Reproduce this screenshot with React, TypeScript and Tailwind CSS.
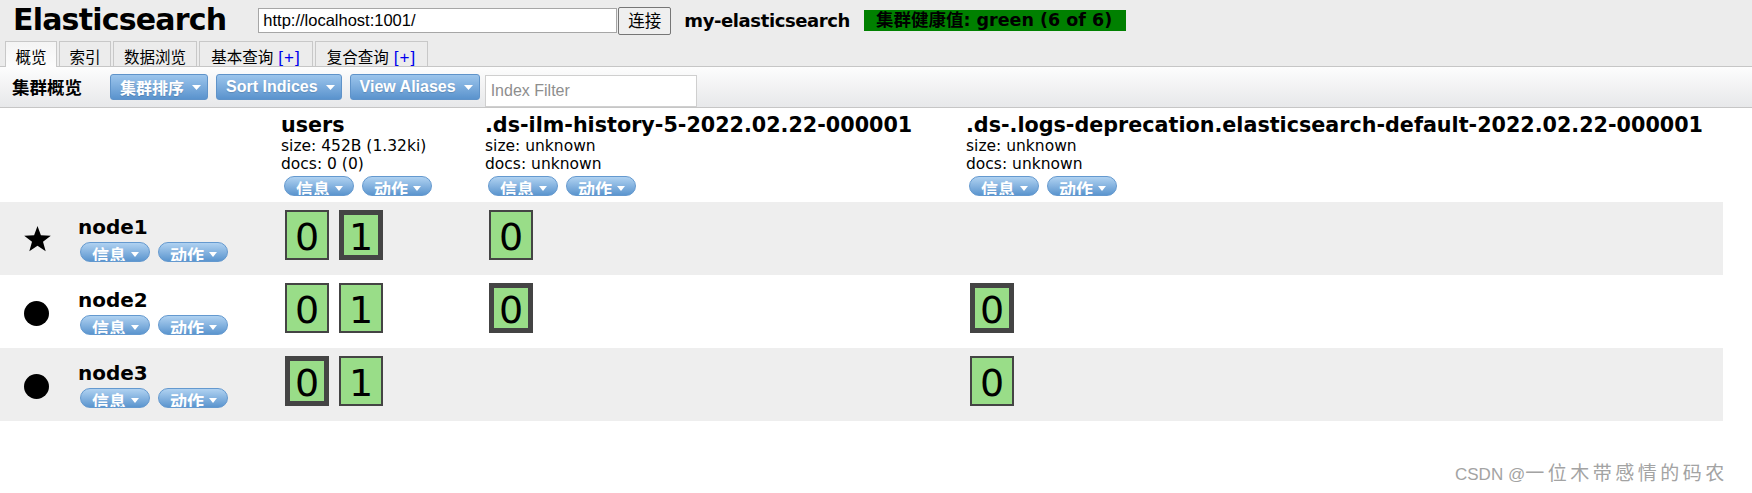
import React from "react";

type ShardT = { n: number; primary?: boolean };

const indices = [
  { name: "users", size: "452B (1.32ki)", docs: "0 (0)" },
  { name: ".ds-ilm-history-5-2022.02.22-000001", size: "unknown", docs: "unknown" },
  { name: ".ds-.logs-deprecation.elasticsearch-default-2022.02.22-000001", size: "unknown", docs: "unknown" },
];

const nodes: { name: string; master?: boolean; shards: ShardT[][] }[] = [
  {
    name: "node1",
    master: true,
    shards: [[{ n: 0 }, { n: 1, primary: true }], [{ n: 0 }], []],
  },
  {
    name: "node2",
    shards: [[{ n: 0 }, { n: 1 }], [{ n: 0, primary: true }], [{ n: 0, primary: true }]],
  },
  {
    name: "node3",
    shards: [[{ n: 0, primary: true }, { n: 1 }], [], [{ n: 0 }]],
  },
];

const tabs = [
  { label: "概览", w: "w-[52px]", active: true },
  { label: "索引", w: "w-[52px]" },
  { label: "数据浏览", w: "w-[84px]" },
  { label: "基本查询", w: "w-[114px]", plus: true },
  { label: "复合查询", w: "w-[113px]", plus: true },
];

export default function App() {
  return (
    <div className="relative w-[1752px] h-[493px] overflow-hidden bg-white text-black font-['DejaVu_Sans','Noto_Sans_CJK_SC',sans-serif]">
      {/* top bar */}
      <div className="bg-[#ececec]">
        <div className="flex items-center h-[41px]">
          <h1 className="ml-[13px] -mt-[2px] text-[30px] leading-[30px] font-bold tracking-[-0.8px]">
            Elasticsearch
          </h1>
          <input
            readOnly
            value="http://localhost:1001/"
            className="ml-[32px] w-[359px] h-[25px] bg-white border border-[#a6a6a6] pl-[4px] outline-none font-['Liberation_Sans',sans-serif] text-[16.5px]"
          />
          <button className="ml-[1px] w-[53px] h-[28px] border border-[#767676] rounded-[2px] bg-[#efefef] font-['Noto_Sans_CJK_SC',sans-serif] text-[16.5px] leading-none">
            连接
          </button>
          <span className="ml-[13px] text-[18px] font-bold tracking-[-0.4px]">my-elasticsearch</span>
          <span className="ml-[14px] w-[262px] h-[21px] bg-[#008000] pl-[12px] flex items-center text-[17.5px] font-bold whitespace-nowrap">
            集群健康值: green (6 of 6)
          </span>
        </div>
        <div className="flex h-[25px] pl-[5px] gap-[2px]">
          {tabs.map((t) => (
            <div
              key={t.label}
              className={`${t.w} border border-b-0 border-[#c8c8c8] flex justify-center items-baseline pt-[7px] font-['Noto_Sans_CJK_SC',sans-serif] text-[15.5px] leading-[15px] whitespace-nowrap ${
                t.active ? "relative z-10 h-[26px] bg-linear-to-b from-[#f4f4f4] to-[#fdfdfd]" : "h-[25px] bg-[#ececec]"
              }`}
            >
              {t.label}
              {t.plus && (
                <span className="ml-[5px] text-[#0000ee] font-['Liberation_Sans',sans-serif] text-[17px] tracking-[1px]">[+]</span>
              )}
            </div>
          ))}
        </div>
      </div>

      {/* toolbar */}
      <div className="h-[42px] border-t border-b border-[#c6c6c6] bg-linear-to-b from-[#fdfdfd] to-[#e7e8ea] flex items-center">
        <span className="ml-[12px] font-['Noto_Sans_CJK_SC',sans-serif] text-[17.5px] font-bold">集群概览</span>
        <ToolButton className="ml-[28px]" cjk>
          集群排序
        </ToolButton>
        <ToolButton className="ml-[8px]">Sort Indices</ToolButton>
        <ToolButton className="ml-[8px]">View Aliases</ToolButton>
        <input
          placeholder="Index Filter"
          className="ml-[5px] self-end w-[212px] h-[32px] bg-white border border-[#cfcfcf] pl-[5px] outline-none font-['Liberation_Sans',sans-serif] text-[16px] placeholder:text-[#8e8e8e]"
        />
      </div>

      {/* cluster table */}
      <div className="w-[1723px]">
        <div className="grid grid-cols-[281px_204px_481px_757px] h-[94px]">
          <div />
          {indices.map((idx) => (
            <div key={idx.name} className="pt-[6px] whitespace-nowrap">
              <div className="text-[20.7px] leading-[23px] font-bold">{idx.name}</div>
              <div className="text-[15.5px] leading-[18px]">size: {idx.size}</div>
              <div className="text-[15.5px] leading-[18px]">docs: {idx.docs}</div>
              <div className="flex gap-[8px] mt-[3px] ml-[3px]">
                <Pill label="信息" />
                <Pill label="动作" />
              </div>
            </div>
          ))}
        </div>

        {nodes.map((node, i) => (
          <div
            key={node.name}
            className={`grid grid-cols-[281px_204px_481px_757px] h-[73px] ${i % 2 === 0 ? "bg-[#eeeeee]" : "bg-white"}`}
          >
            <div className="flex items-center">
              <div className="w-[78px] pl-[24px]">
                {node.master ? (
                  <svg width="27" height="26" viewBox="0 0 27 26">
                    <polygon
                      points="13.5,0 16.9,9.3 26.8,9.7 19,15.8 21.7,25.3 13.5,19.8 5.3,25.3 8,15.8 0.2,9.7 10.1,9.3"
                      fill="#000"
                    />
                  </svg>
                ) : (
                  <div className="w-[25px] h-[25px] mt-[3px] rounded-full bg-black" />
                )}
              </div>
              <div>
                <div className="text-[20px] leading-[23px] font-bold">{node.name}</div>
                <div className="flex gap-[8px] mt-[3px] ml-[2px]">
                  <Pill label="信息" />
                  <Pill label="动作" />
                </div>
              </div>
            </div>
            {node.shards.map((list, j) => (
              <div key={j} className="pt-[8px] pl-[4px] flex items-start gap-[10px]">
                {list.map((s, k) => (
                  <Shard key={k} n={s.n} primary={s.primary} />
                ))}
              </div>
            ))}
          </div>
        ))}
      </div>

      {/* watermark */}
      <div className="absolute left-[1455px] top-[458px] flex items-baseline text-[#a3a3a3] [text-shadow:1px_1px_0_#ffffff] whitespace-nowrap">
        <span className="font-['Liberation_Sans',sans-serif] text-[17px]">CSDN @</span>
        <span className="font-['Noto_Sans_CJK_SC',sans-serif] text-[19px] tracking-[3.5px]">一位木带感情的码农</span>
      </div>
    </div>
  );
}

function Caret({ w = 9, h = 5, className = "" }: { w?: number; h?: number; className?: string }) {
  return (
    <svg width={w} height={h} viewBox={`0 0 ${w} ${h}`} className={className}>
      <path d={`M0 0H${w}L${w / 2} ${h}Z`} fill="#ffffff" />
    </svg>
  );
}

function ToolButton({ children, className = "", cjk = false }: any) {
  return (
    <div
      className={`h-[26px] flex items-center pl-[9px] pr-[6px] rounded-[3px] border border-[#5f93c9] bg-linear-to-b from-[#9cc5ec] to-[#5a93cd] text-white font-bold text-[16px] [text-shadow:0_1px_1px_rgba(0,0,0,0.15)] whitespace-nowrap ${className} ${
        cjk ? "font-['Noto_Sans_CJK_SC',sans-serif] text-[16.5px]" : "font-['Liberation_Sans',sans-serif]"
      }`}
    >
      {children}
      <Caret w={9} h={5} className="ml-[8px]" />
    </div>
  );
}

function Pill({ label }: { label: string }) {
  return (
    <div className="w-[70px] h-[20px] rounded-full border border-[#6499cf] bg-linear-to-b from-[#b0d2f1] to-[#5b95ce] overflow-hidden flex items-start pl-[11px] pt-[3px]">
      <span className="font-['Noto_Sans_CJK_SC',sans-serif] text-[17px] leading-[17px] font-bold text-white">{label}</span>
      <Caret w={8} h={5} className="ml-[5px] mt-[6px]" />
    </div>
  );
}

function Shard({ n, primary }: { n: number; primary?: boolean }) {
  return (
    <div
      className={`w-[44px] h-[50px] bg-[#99dd88] border-[#444444] flex items-center justify-center pt-[3px] text-[38px] leading-none ${
        primary ? "border-[5px]" : "border-2"
      }`}
    >
      {n}
    </div>
  );
}
